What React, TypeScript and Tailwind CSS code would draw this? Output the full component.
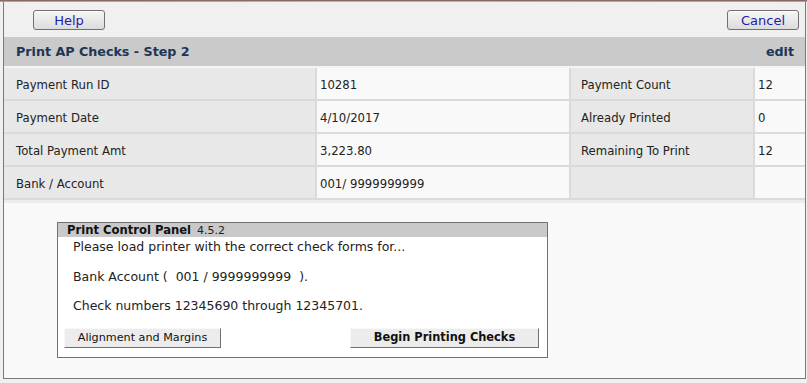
import React from "react";

const rows: [string, string, string, string][] = [
  ["Payment Run ID", "10281", "Payment Count", "12"],
  ["Payment Date", "4/10/2017", "Already Printed", "0"],
  ["Total Payment Amt", "3,223.80", "Remaining To Print", "12"],
  ["Bank / Account", "001/ 9999999999", "", ""],
];

function TopButton({ children }: { children: React.ReactNode }) {
  return (
    <button className="h-[20px] w-[72px] rounded-[3px] border border-[#707070] bg-gradient-to-b from-[#f6f6f6] to-[#dcdcdc] text-[13px] leading-none text-[#1c1ca8] font-['DejaVu_Sans',sans-serif] shadow-[inset_0_1px_0_#ffffff]">
      {children}
    </button>
  );
}

export default function App() {
  return (
    <div className="w-[807px] h-[383px] bg-[#f0f0f0] font-['DejaVu_Sans',sans-serif] text-[#222] overflow-hidden">
      <div className="h-[2px] bg-gradient-to-r from-[#b89a9a] via-[#c9aeae] to-[#b89a9a] border-t border-[#8a6868]" />
      <div className="ml-[3px] w-[803px] h-[377px] border-l border-r border-b border-[#7a7a7a] bg-[#f9f9f9] flex flex-col">
        <div className="h-[35px] bg-[#f0f0f0] flex items-start justify-between pl-[29px] pr-[6px] pt-[8px]">
          <TopButton>Help</TopButton>
          <TopButton>Cancel</TopButton>
        </div>
        <div className="h-[29px] bg-[#c9cac9] flex items-center justify-between pl-[12px] pr-[11px] text-[12.7px] font-bold text-[#1e3556]">
          <span>Print AP Checks - Step 2</span>
          <span>edit</span>
        </div>
        <div className="h-[2px] bg-[#f4f4f4]" />
        <div className="grid grid-cols-[311px_252px_182px_50px] gap-[2px] bg-[#dadada] pb-[2px] text-[11.7px]">
          {rows.map((r, i) => (
            <React.Fragment key={i}>
              <div className="h-[31px] bg-[#e8e8e8] flex items-center pl-[12px] pt-[4px]">{r[0]}</div>
              <div className="h-[31px] bg-[#f9f9f9] flex items-center pl-[3px] pt-[4px]">{r[1]}</div>
              <div className="h-[31px] bg-[#e8e8e8] flex items-center pl-[10px] pt-[4px]">{r[2]}</div>
              <div className="h-[31px] bg-[#f9f9f9] flex items-center pl-[3px] pt-[4px]">{r[3]}</div>
            </React.Fragment>
          ))}
        </div>
        <div className="h-[3px] bg-[#ececec]" />
        <div className="pl-[53px] pt-[19px]">
          <div className="w-[491px] h-[136px] border border-[#707070] bg-white flex flex-col">
            <div className="h-[14px] bg-[#c8c9c8] flex items-end pl-[9px] gap-[6px] leading-none">
              <span className="text-[11.6px] font-bold text-[#111]">Print Control Panel</span>
              <span className="text-[11px] text-[#222] pb-[1px]">4.5.2</span>
            </div>
            <div className="pl-[15px] text-[12.5px] leading-[16px] text-[#222]">
              <div className="pt-[2px]">Please load printer with the correct check forms for...</div>
              <div className="pt-[14px]">Bank Account (&nbsp; 001 / 9999999999 &nbsp;).</div>
              <div className="pt-[13px]">Check numbers 12345690 through 12345701.</div>
            </div>
            <div className="flex justify-between pl-[6px] pr-[8px] pt-[14px]">
              <button className="h-[20px] w-[157px] bg-[#ececec] border border-t-[#f8f8f8] border-l-[#f8f8f8] border-r-[#707070] border-b-[#707070] text-[11.2px] text-[#111]">
                Alignment and Margins
              </button>
              <button className="h-[20px] w-[189px] bg-[#ececec] border border-t-[#f8f8f8] border-l-[#f8f8f8] border-r-[#707070] border-b-[#707070] text-[11.4px] font-bold text-[#111]">
                Begin Printing Checks
              </button>
            </div>
          </div>
        </div>
      </div>
    </div>
  );
}
